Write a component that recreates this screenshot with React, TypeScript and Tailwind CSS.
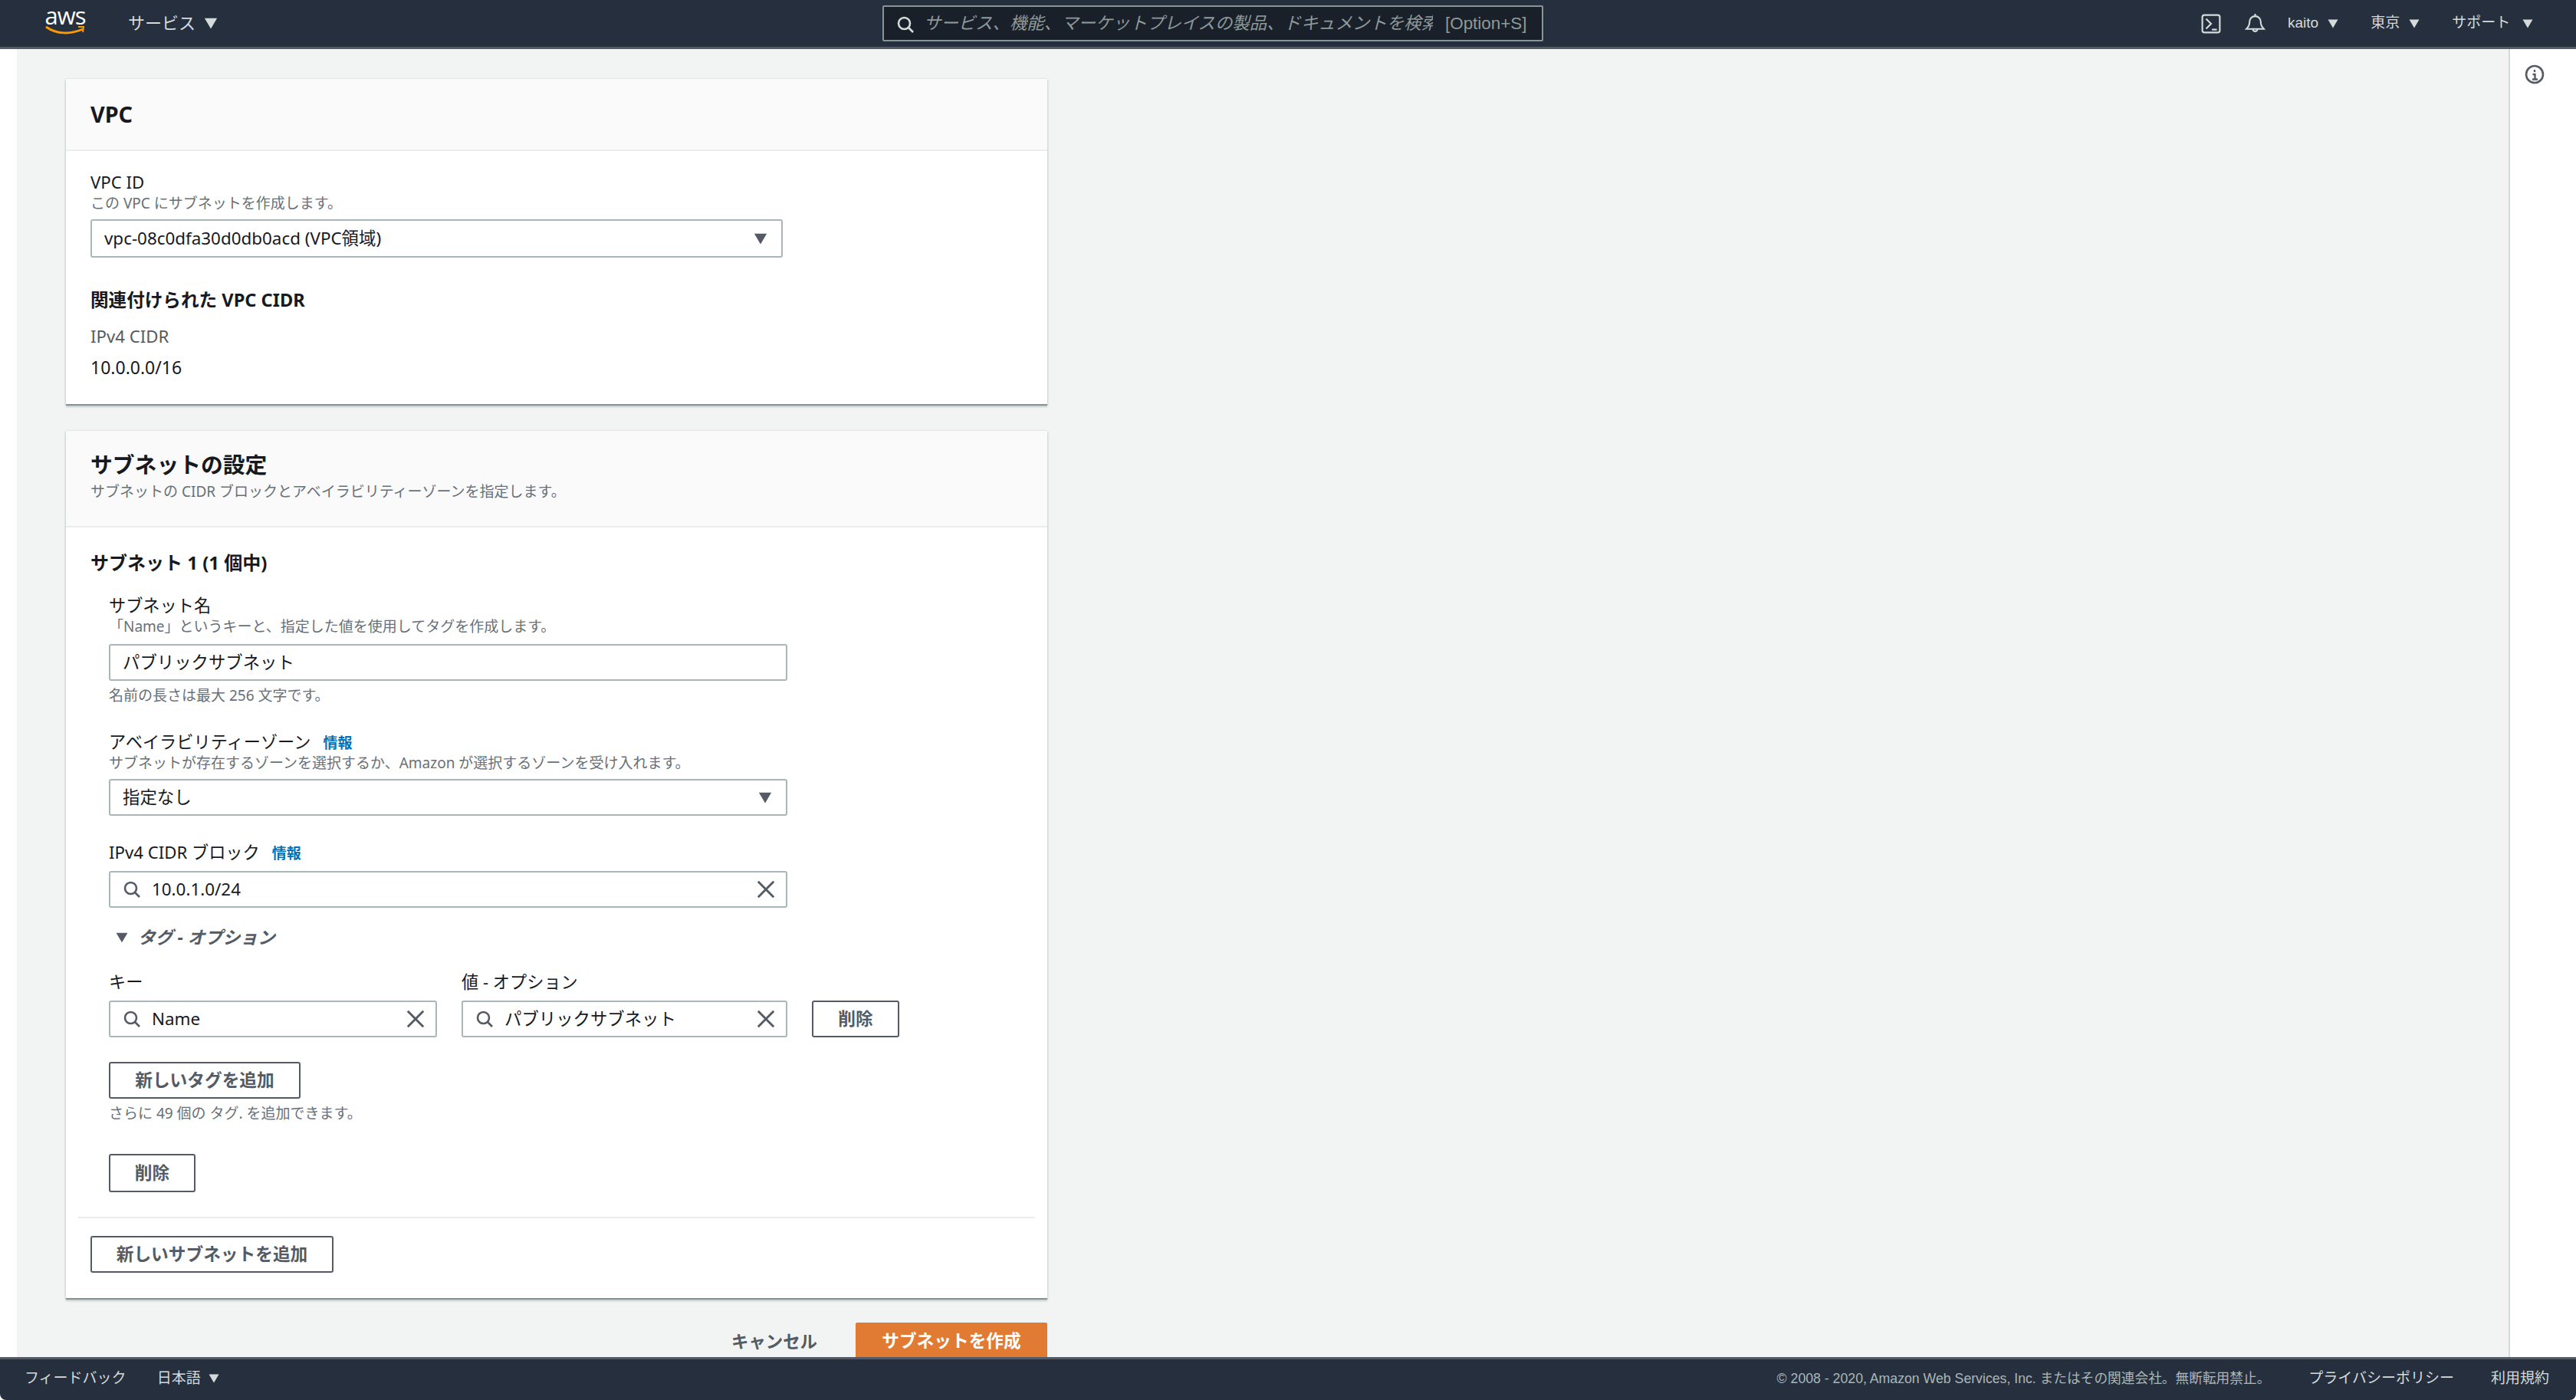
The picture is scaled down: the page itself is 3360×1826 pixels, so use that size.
import React from "react";

const Caret = ({ className = "" }: { className?: string }) => (
  <svg viewBox="0 0 14 12" className={className} fill="currentColor"><path d="M0.5 0.5h13L7 11.5z" /></svg>
);
const Search = ({ className = "" }: { className?: string }) => (
  <svg viewBox="0 0 24 24" className={className} fill="none" stroke="currentColor" strokeWidth="2.6"><circle cx="10.5" cy="10.5" r="7.5" /><path d="M16 16l6 6" /></svg>
);
const Close = () => (
  <svg viewBox="0 0 20 20" className="w-[24px] h-[24px] text-[#545b64] shrink-0" fill="none" stroke="currentColor" strokeWidth="2.4"><path d="M1.5 1.5l17 17M18.5 1.5l-17 17" /></svg>
);
const Label = ({ children }: { children: React.ReactNode }) => (
  <div className="h-[28px] text-[22.2px] leading-[28px] text-[#16191f] whitespace-nowrap">{children}</div>
);
const Desc = ({ children }: { children: React.ReactNode }) => (
  <div className="h-[26px] text-[19px] leading-[26px] text-[#687078] whitespace-nowrap">{children}</div>
);
const Info = () => <span className="ml-4 text-[19px] font-bold text-[#0073bb]">情報</span>;
const SelectBox = ({ value, width, height }: { value: string; width: string; height: string }) => (
  <div className={`${width} ${height} flex items-center justify-between pl-[16px] pr-[18px] border-2 border-[#aab7b8] rounded-[3px] bg-white text-[22.4px] text-[#16191f]`}>
    <span>{value}</span>
    <Caret className="w-[18px] h-[15px] text-[#545b64]" />
  </div>
);
const SearchInput = ({ value, width }: { value: string; width: string }) => (
  <div className={`${width} h-[48px] flex items-center pl-[16px] pr-[14px] border-2 border-[#aab7b8] rounded-[3px] bg-white text-[22.4px] text-[#16191f]`}>
    <Search className="w-[24px] h-[24px] text-[#545b64] shrink-0" />
    <span className="ml-[14px] flex-1">{value}</span>
    <Close />
  </div>
);
const Btn = ({ children, className = "" }: { children: React.ReactNode; className?: string }) => (
  <div className={`flex items-center justify-center border-2 border-[#545b64] rounded-[3px] bg-white text-[22.7px] font-bold text-[#545b64] ${className}`}>{children}</div>
);
const Card = ({ children, className = "" }: { children: React.ReactNode; className?: string }) => (
  <section className={`w-[1280px] bg-white border-b-2 border-[#879596] shadow-[0_1px_3px_rgba(0,28,36,0.3)] ${className}`}>{children}</section>
);
const TopItem = ({ label, className = "" }: { label: string; className?: string }) => (
  <div className={`flex items-center gap-[12px] ${className}`}>
    <span>{label}</span>
    <Caret className="w-[14px] h-[12px]" />
  </div>
);

export default function App() {
  return (
    <div className="w-[3360px] h-[1826px] overflow-hidden flex flex-col bg-white font-['Noto_Sans','Noto_Sans_CJK_JP',sans-serif]">
      <header className="h-[64px] shrink-0 flex items-center bg-[#252f3e] border-b-[3px] border-[#545b64] font-['Liberation_Sans','Noto_Sans_CJK_JP',sans-serif] text-[#d5dbdb]">
        <div className="ml-[59px] w-[52px] h-[44px] self-start mt-[6px] flex flex-col items-center relative">
          <span className="text-[31px] leading-[28px] text-white font-['Open_Sans',sans-serif] tracking-[-1px]">aws</span>
          <svg viewBox="0 0 54 14" className="w-[54px] h-[14px] absolute left-0 top-[27px]" fill="none" stroke="#ff9900" strokeWidth="3">
            <path d="M1 2c14 10 32 10 48 3" /><path d="M43 2h7l-1 7" strokeWidth="2" />
          </svg>
        </div>
        <div className="ml-[56px] flex items-center gap-[11px] text-[22px]">
          <span>サービス</span>
          <Caret className="w-[18px] h-[15px]" />
        </div>
        <div className="ml-[867px] w-[862px] h-[47px] flex items-center pl-[16px] pr-[12px] bg-[#1a2029] border-2 border-[#879596] rounded-[2px]">
          <Search className="w-[24px] h-[24px] text-[#d5dbdb] shrink-0 mt-[3px]" />
          <span className="ml-[12px] w-[664px] overflow-hidden whitespace-nowrap italic text-[22.4px] text-[#8d9a9b]">サービス、機能、マーケットプレイスの製品、ドキュメントを検索</span>
          <span className="ml-[16px] text-[22.4px] text-[#8d9a9b] whitespace-nowrap">[Option+S]</span>
        </div>
        <svg viewBox="0 0 24 24" className="ml-[858px] w-[26px] h-[26px]" fill="none" stroke="currentColor" strokeWidth="2"><rect x="1.5" y="1.5" width="21" height="21" rx="2.5" /><path d="M6 6l6 6-6 6M13 19h6" /></svg>
        <svg viewBox="0 0 26 26" className="ml-[31px] w-[27px] h-[27px]" fill="none" stroke="currentColor" strokeWidth="2"><path d="M2 20c3-3 4-5 4-9 0-4 3-7 7-7s7 3 7 7c0 4 1 6 4 9z" /><path d="M13 1v3M10 20a3 3 0 006 0" /></svg>
        <TopItem label="kaito" className="ml-[29px] text-[19px]" />
        <TopItem label="東京" className="ml-[42px] text-[19px]" />
        <TopItem label="サポート" className="ml-[42px] text-[19px] !gap-[16px]" />
      </header>

      <div className="flex-1 min-h-0 flex">
        <div className="w-[22px] shrink-0 bg-white" />
        <main className="flex-1 min-w-0 bg-[#f2f3f3] overflow-hidden pl-[64px] pt-[39px]">
          <Card>
            <div className="h-[94px] flex items-center px-[32px] bg-[#fafafa] border-b-2 border-[#eaeded]">
              <h2 className="text-[28.8px] font-bold text-[#16191f]">VPC</h2>
            </div>
            <div className="px-[32px] pt-[27px] h-[330px]">
              <Label>VPC ID</Label>
              <Desc>この VPC にサブネットを作成します。</Desc>
              <div className="mt-[8px]"><SelectBox value="vpc-08c0dfa30d0db0acd (VPC領域)" width="w-[903px]" height="h-[50px]" /></div>
              <h3 className="mt-[40px] h-[30px] text-[23.6px] leading-[30px] font-bold text-[#16191f]">関連付けられた VPC CIDR</h3>
              <div className="mt-[18px] h-[30px] text-[22.2px] leading-[30px] text-[#545b64]">IPv4 CIDR</div>
              <div className="mt-[10px] h-[30px] text-[23px] leading-[30px] text-[#16191f]">10.0.0.0/16</div>
            </div>
          </Card>

          <Card className="mt-[33px]">
            <div className="h-[126px] pt-[25px] px-[32px] bg-[#fafafa] border-b-2 border-[#eaeded]">
              <h2 className="h-[38px] text-[28.8px] leading-[38px] font-bold text-[#16191f]">サブネットの設定</h2>
              <div className="mt-[3px]"><Desc>サブネットの CIDR ブロックとアベイラビリティーゾーンを指定します。</Desc></div>
            </div>
            <div className="pt-[31px] h-[1005px]">
              <h3 className="px-[32px] h-[30px] text-[24px] leading-[30px] font-bold text-[#16191f]">サブネット 1 (1 個中)</h3>
              <div className="pl-[56px] pt-[27px]">
                <Label>サブネット名</Label>
                <Desc>「Name」というキーと、指定した値を使用してタグを作成します。</Desc>
                <div className="mt-[10px] w-[885px] h-[48px] flex items-center px-[16px] border-2 border-[#aab7b8] rounded-[3px] text-[22.4px] text-[#16191f]">パブリックサブネット</div>
                <div className="mt-[6px]"><Desc>名前の長さは最大 256 文字です。</Desc></div>
                <div className="mt-[34px]"><Label>アベイラビリティーゾーン<Info /></Label></div>
                <Desc>サブネットが存在するゾーンを選択するか、Amazon が選択するゾーンを受け入れます。</Desc>
                <div className="mt-[8px]"><SelectBox value="指定なし" width="w-[885px]" height="h-[48px]" /></div>
                <div className="mt-[34px]"><Label>IPv4 CIDR ブロック<Info /></Label></div>
                <div className="mt-[10px]"><SearchInput value="10.0.1.0/24" width="w-[885px]" /></div>
                <div className="mt-[24px] h-[30px] flex items-center gap-[13px] pl-[9px] text-[22.8px] leading-[30px] font-bold italic text-[#545b64]">
                  <Caret className="w-[16px] h-[14px]" />
                  <span>タグ - オプション</span>
                </div>
                <div className="mt-[29px] flex gap-[32px]">
                  <div className="w-[428px]"><Label>キー</Label></div>
                  <Label>値 - オプション</Label>
                </div>
                <div className="mt-[10px] flex gap-[32px]">
                  <SearchInput value="Name" width="w-[428px]" />
                  <SearchInput value="パブリックサブネット" width="w-[425px]" />
                  <Btn className="w-[114px] h-[48px]">削除</Btn>
                </div>
                <Btn className="mt-[32px] w-[250px] h-[48px]">新しいタグを追加</Btn>
                <div className="mt-[6px]"><Desc>さらに 49 個の タグ. を追加できます。</Desc></div>
                <Btn className="mt-[40px] w-[113px] h-[50px]">削除</Btn>
              </div>
              <div className="mx-[16px] mt-[32px] border-t-2 border-[#eaeded]" />
              <div className="px-[32px] mt-[23px]"><Btn className="w-[317px] h-[48px]">新しいサブネットを追加</Btn></div>
            </div>
          </Card>

          <div className="w-[1280px] mt-[30px] flex items-start justify-end">
            <span className="mr-[50px] mt-[8px] text-[22.4px] font-bold text-[#545b64]">キャンセル</span>
            <div className="w-[250px] h-[49px] flex items-center justify-center bg-[#e17a33] rounded-[2px] text-[22.7px] font-bold text-white">サブネットを作成</div>
          </div>
        </main>
        <aside className="w-[88px] shrink-0 bg-white border-l-2 border-[#d5dbdb] pl-[19px] pt-[20px]">
          <svg viewBox="0 0 26 26" className="w-[26px] h-[26px] text-[#545b64]" fill="none" stroke="currentColor" strokeWidth="2.6"><circle cx="13" cy="13" r="11" /><path d="M13 7v3M10.5 13H13.5V19M10 19.5h7" strokeWidth="2.4" /></svg>
        </aside>
      </div>

      <footer className="h-[56px] shrink-0 flex items-center pb-[3px] bg-[#252f3e] border-t-[3px] border-[#545b64] rounded-b-[8px] font-['Liberation_Sans','Noto_Sans_CJK_JP',sans-serif] text-[#d5dbdb] text-[19px]">
        <span className="ml-[32px]">フィードバック</span>
        <span className="ml-[40px]">日本語</span>
        <Caret className="ml-[10px] w-[14px] h-[12px]" />
        <span className="ml-auto text-[17.7px] text-[#aab7b8]">© 2008 - 2020, Amazon Web Services, Inc. またはその関連会社。無断転用禁止。</span>
        <span className="ml-[50px]">プライバシーポリシー</span>
        <span className="ml-[48px] mr-[35px]">利用規約</span>
      </footer>
    </div>
  );
}
